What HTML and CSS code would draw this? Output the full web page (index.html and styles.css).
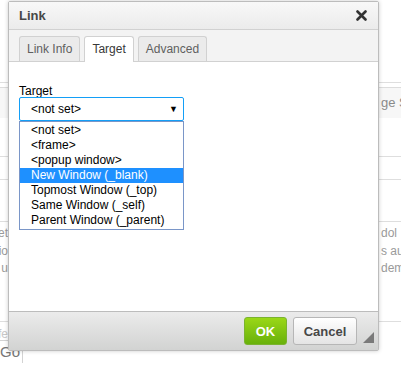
FILE: index.html
```html
<!DOCTYPE html>
<html lang="en">
<head>
    <meta charset="UTF-8">
    <title>Link</title>
    <link rel="stylesheet" href="styles.css">
</head>
<body>

    <!-- Editor page behind the dialog -->
    <div class="page">
        <div class="rule rule-top"></div>
        <div class="toolbar-band">
            <span>ge S</span>
        </div>
        <div class="rule rule-a"></div>
        <div class="rule rule-b"></div>
        <div class="rule rule-c"></div>
        <div class="text-row"><span class="left">et</span><span class="right">dol</span></div>
        <div class="text-row"><span class="left">io</span><span class="right">s au</span></div>
        <div class="text-row"><span class="left">u</span><span class="right">dem</span></div>
        <div class="rule rule-d"></div>
        <div class="text-row faded"><span class="left">fe</span></div>
        <div class="go-row"><span class="go">Go</span></div>
    </div>

    <!-- Link dialog -->
    <div class="dialog">
        <div class="dialog-title">
            <span>Link</span>
            <svg class="close" width="11" height="11" viewBox="0 0 11 11">
                <path d="M1.5 1.5 L9.5 9.5 M9.5 1.5 L1.5 9.5" stroke="#333" stroke-width="2.6" stroke-linecap="round"/>
            </svg>
        </div>

        <div class="tabs">
            <span class="tab">Link Info</span>
            <span class="tab active">Target</span>
            <span class="tab">Advanced</span>
        </div>

        <div class="dialog-body">
            <label class="field-label">Target</label>
            <div class="select-wrap">
                <div class="select">
                    <span>&lt;not set&gt;</span>
                    <span class="arrow">&#9660;</span>
                </div>
                <ul class="options">
                    <li>&lt;not set&gt;</li>
                    <li>&lt;frame&gt;</li>
                    <li>&lt;popup window&gt;</li>
                    <li class="selected">New Window (_blank)</li>
                    <li>Topmost Window (_top)</li>
                    <li>Same Window (_self)</li>
                    <li>Parent Window (_parent)</li>
                </ul>
            </div>
        </div>

        <div class="dialog-footer">
            <button class="btn btn-ok">OK</button>
            <button class="btn btn-cancel">Cancel</button>
            <svg class="resize" width="11" height="11" viewBox="0 0 11 11">
                <polygon points="11,0 11,11 0,11" fill="#7a7a7a"/>
            </svg>
        </div>
    </div>

</body>
</html>
```

FILE: styles.css
```css
body {
    margin: 0;
    height: 365px;
    overflow: hidden;
    background: #ffffff;
    font-family: Arial, "Liberation Sans", sans-serif;
    position: relative;
}

/* Page behind the dialog */
.page {
    display: flex;
    flex-direction: column;
    padding-top: 82px;
    color: #9a9a9a;
    font-size: 14px;
}

.rule {
    border-top: 1px solid #dedede;
}

.rule-top {
    margin-bottom: 4px;
}

.toolbar-band {
    height: 30px;
    line-height: 30px;
    background: #f7f7f7;
    border-top: 1px solid #dcdcdc;
    white-space: nowrap;
    padding-left: 381px;
    color: #8a8a8a;
    font-size: 13px;
}

.rule-a {
    margin-top: 38px;
}

.rule-b {
    margin-top: 22px;
}

.rule-c {
    margin-top: 41px;
    margin-bottom: 3px;
}

.text-row {
    display: flex;
    justify-content: space-between;
    height: 17.5px;
    line-height: 17.5px;
    white-space: nowrap;
}

.text-row .left {
    width: 8px;
    font-size: 12px;
    display: flex;
    justify-content: flex-end;
}

.text-row .right {
    width: 20px;
    font-size: 12px;
}

.faded {
    color: #c8c8c8;
}

.rule-d {
    margin-top: 43px;
    margin-bottom: 4px;
}

.go-row {
    margin-top: -3px;
}

.go {
    display: inline-block;
    width: 22px;
    height: 22px;
    line-height: 22px;
    border-top: 1px solid #d3d3d3;
    border-right: 1px solid #d3d3d3;
    color: #777;
    font-size: 15px;
}

/* Dialog */
.dialog {
    position: absolute;
    left: 8px;
    top: 1px;
    width: 369px;
    height: 348px;
    border: 1px solid #bcbcbc;
    border-radius: 2px;
    background: #ffffff;
    box-shadow: 0 0 4px rgba(0, 0, 0, 0.2);
    display: flex;
    flex-direction: column;
}

.dialog-title {
    height: 27px;
    display: flex;
    align-items: center;
    justify-content: space-between;
    padding: 0 11px 0 10px;
    background: linear-gradient(#f8f8f8, #ebebeb);
    border-bottom: 1px solid #d1d1d1;
    font-size: 13px;
    font-weight: bold;
    color: #474747;
}

.tabs {
    display: flex;
    gap: 4px;
    padding: 6px 0 0 10px;
    height: 25px;
    background: #f3f3f3;
    border-bottom: 1px solid #d1d1d1;
}

.tab {
    height: 24px;
    line-height: 24px;
    padding: 0 7px;
    font-size: 12px;
    color: #5f5f5f;
    background: #ebebeb;
    border: 1px solid #d1d1d1;
    border-bottom: none;
    border-radius: 3px 3px 0 0;
}

.tab.active {
    background: #ffffff;
    color: #383838;
    height: 25px;
    margin-bottom: -1px;
}

.dialog-body {
    flex: 1;
    padding: 22px 10px 0 10px;
}

.field-label {
    display: block;
    font-size: 12px;
    color: #000;
    line-height: 14px;
    margin-bottom: -1px;
}

.select-wrap {
    position: relative;
    width: 165px;
}

.select {
    height: 22px;
    border: 1px solid #139ff7;
    border-radius: 2px;
    display: flex;
    align-items: center;
    justify-content: space-between;
    padding: 0 5px 0 11px;
    font-size: 12px;
    color: #000;
}

.arrow {
    font-size: 9px;
}

/* Open dropdown list of the select */
.options {
    position: absolute;
    top: 24px;
    left: 0;
    width: 163px;
    margin: 0;
    padding: 1px 0;
    list-style: none;
    background: #ffffff;
    border: 1px solid #7a96c8;
    font-size: 12px;
    color: #000;
}

.options li {
    height: 15px;
    line-height: 15px;
    padding-left: 11px;
    white-space: nowrap;
}

.options li.selected {
    background: #1e90ff;
    color: #ffffff;
}

.dialog-footer {
    position: relative;
    border-top: 1px solid #bcbcbc;
    background: linear-gradient(#ebebeb, #d2d3d2);
    display: flex;
    justify-content: flex-end;
    align-items: flex-start;
    gap: 6px;
    padding: 5px 21px 0 0;
    box-sizing: border-box;
    height: 39px;
}

.btn {
    height: 28px;
    border-radius: 3px;
    font-family: Arial, "Liberation Sans", sans-serif;
    font-size: 13px;
    font-weight: bold;
    padding: 0;
}

.btn-ok {
    width: 43px;
    color: #ffffff;
    background: linear-gradient(#9ad717, #69b10b);
    border: 1px solid #7ab32f;
}

.btn-cancel {
    width: 64px;
    color: #474747;
    background: linear-gradient(#ffffff, #e4e4e4);
    border: 1px solid #b6b6b6;
}

.resize {
    position: absolute;
    right: 4px;
    bottom: 7px;
}
```
